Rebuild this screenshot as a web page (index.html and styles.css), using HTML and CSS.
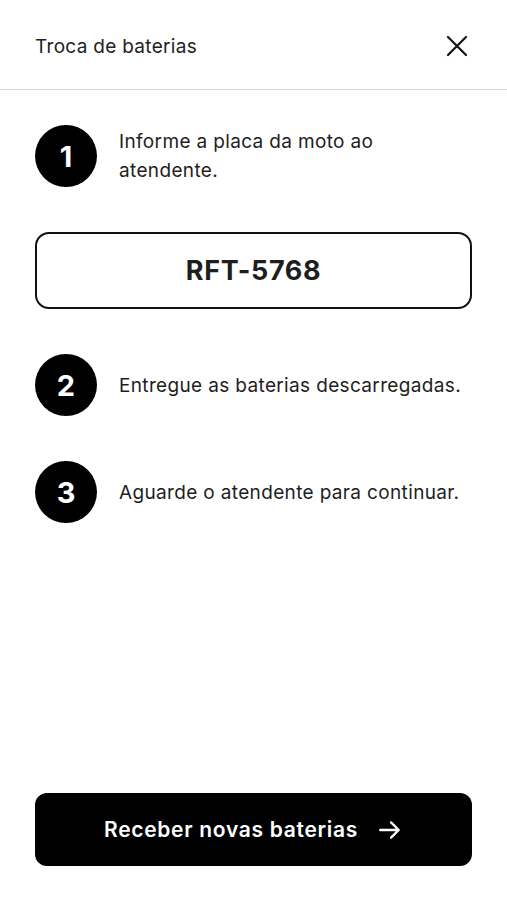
FILE: index.html
```html
<!DOCTYPE html>
<html lang="pt-BR">
<head>
  <meta charset="UTF-8">
  <meta name="viewport" content="width=device-width, initial-scale=1.0">
  <title>Troca de baterias</title>
  <link rel="stylesheet" href="styles.css">
</head>
<body>
  <div class="tela">
    <header class="topo">
      <span class="titulo">Troca de baterias</span>
      <button class="fechar" aria-label="Fechar">
        <svg width="24" height="24" viewBox="0 0 24 24" fill="none" stroke="#111" stroke-width="2.2" stroke-linecap="round">
          <path d="M3 3L21 21M21 3L3 21"/>
        </svg>
      </button>
    </header>

    <main class="conteudo">
      <div class="passo">
        <span class="numero">1</span>
        <p class="texto">Informe a placa da moto ao atendente.</p>
      </div>

      <div class="placa">RFT-5768</div>

      <div class="passo">
        <span class="numero">2</span>
        <p class="texto">Entregue as baterias descarregadas.</p>
      </div>

      <div class="passo">
        <span class="numero">3</span>
        <p class="texto">Aguarde o atendente para continuar.</p>
      </div>
    </main>

    <div class="rodape">
      <button class="botao">
        Receber novas baterias
        <svg width="26" height="26" viewBox="0 0 24 24" fill="none" stroke="#fff" stroke-width="2.2" stroke-linecap="round" stroke-linejoin="round">
          <path d="M3 12H20M13 5L20 12L13 19"/>
        </svg>
      </button>
    </div>
  </div>
</body>
</html>
```

FILE: styles.css
```css
* {
  box-sizing: border-box;
}
body {
  margin: 0;
  background: #fff;
  font-family: Inter, "Noto Sans", sans-serif;
  color: #1e1e1e;
}
.tela {
  min-height: 100vh;
  display: flex;
  flex-direction: column;
}
.topo {
  height: 90px;
  display: flex;
  align-items: center;
  justify-content: space-between;
  padding: 3px 38px 0 35px;
  border-bottom: 1px solid #d9d9d9;
}
.titulo {
  font-size: 19px;
  letter-spacing: 0.3px;
  color: #222;
}
.fechar {
  background: none;
  border: 0;
  padding: 0;
  display: flex;
  cursor: pointer;
}
.conteudo {
  padding: 35px 35px 0;
  display: flex;
  flex-direction: column;
  gap: 45px;
}
.passo {
  display: flex;
  align-items: center;
  gap: 22px;
}
.numero {
  flex: none;
  width: 62px;
  height: 62px;
  border-radius: 50%;
  background: #000;
  color: #fff;
  font-size: 29px;
  font-weight: 700;
  display: flex;
  align-items: center;
  justify-content: center;
}
.texto {
  margin: 0;
  font-size: 19px;
  letter-spacing: 0.35px;
  line-height: 29px;
  max-width: 280px;
}
.passo:not(:first-child) .texto {
  max-width: none;
}
.placa {
  height: 77px;
  border: 2px solid #111;
  border-radius: 14px;
  display: flex;
  align-items: center;
  justify-content: center;
  font-size: 27px;
  font-weight: 700;
  letter-spacing: 0.6px;
}
.rodape {
  margin-top: auto;
  padding: 0 35px 34px;
}
.botao {
  width: 100%;
  height: 73px;
  border: 0;
  border-radius: 12px;
  background: #000;
  color: #fff;
  font-family: inherit;
  font-size: 21px;
  font-weight: 600;
  letter-spacing: 0.7px;
  display: flex;
  align-items: center;
  justify-content: center;
  gap: 19px;
  cursor: pointer;
}
```
